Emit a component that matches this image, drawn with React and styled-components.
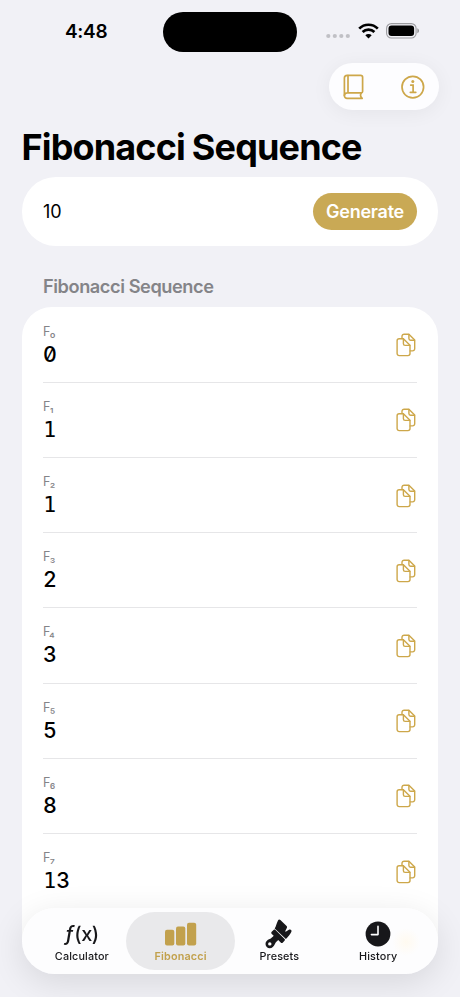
import React, { useState } from 'react';
import styled, { createGlobalStyle, ThemeProvider } from 'styled-components';

const theme = {
  colors: {
    page: '#f1f1f6',
    card: '#ffffff',
    gold: '#c9a955',
    icon: '#cda74a',
    label: '#848488',
    line: '#e6e6e8',
    text: '#000000',
  },
};

const GlobalStyle = createGlobalStyle`
  * {
    box-sizing: border-box;
  }

  body {
    margin: 0;
    background: #f1f1f6;
    font-family: Inter, 'Liberation Sans', sans-serif;
    -webkit-font-smoothing: antialiased;
  }

  button {
    border: 0;
    padding: 0;
    background: none;
    font-family: inherit;
    color: inherit;
  }
`;

const Screen = styled.div`
  height: 997px;
  overflow: hidden;
  background-color: ${({ theme }) => theme.colors.page};
  color: ${({ theme }) => theme.colors.text};
`;

const StatusBar = styled.div`
  height: 63px;
  display: grid;
  grid-template-columns: 163px 134px 1fr;
  align-items: center;
`;

const Clock = styled.div`
  padding-left: 65px;
  padding-top: 1px;
  font-size: 19px;
  line-height: 24px;
  font-weight: 600;
  letter-spacing: -0.3px;
`;

const Island = styled.div`
  height: 39.5px;
  border-radius: 20px;
  background-color: #000;
  margin-top: 1px;
`;

const Indicators = styled.div`
  display: flex;
  align-items: center;
  gap: 7.5px;
  padding-left: 29px;
  padding-bottom: 1px;
`;

const Toolbar = styled.div`
  width: 109.5px;
  height: 47px;
  margin-left: auto;
  margin-right: 21.5px;
  padding: 0 13px 0 14.3px;
  display: flex;
  align-items: center;
  justify-content: space-between;
  border-radius: 24px;
  background-color: #fdfdff;
  box-shadow: 0 3px 20px rgba(0, 0, 0, 0.055);
`;

const ToolbarButton = styled.button`
  height: 26px;
  display: flex;
  color: ${({ theme }) => theme.colors.icon};
`;

const Title = styled.h1`
  margin: 15px 0 8px 21.5px;
  font-size: 36px;
  line-height: 44px;
  font-weight: 700;
  letter-spacing: -0.85px;
  word-spacing: -0.8px;
  white-space: nowrap;
`;

const Content = styled.main`
  padding: 0 22px;
`;

const InputCard = styled.section`
  height: 68.5px;
  padding: 0 21px;
  display: flex;
  align-items: center;
  justify-content: space-between;
  border-radius: 34px;
  background-color: ${({ theme }) => theme.colors.card};
`;

const InputValue = styled.span`
  font-size: 18px;
  letter-spacing: -0.1px;
`;

const GenerateButton = styled.button`
  width: 104px;
  height: 36.5px;
  border-radius: 19px;
  background-color: ${({ theme }) => theme.colors.gold};
  color: #fff;
  font-size: 18px;
  font-weight: 600;
  letter-spacing: -0.25px;
`;

const SectionTitle = styled.h2`
  margin: 29px 0 9.5px 21px;
  font-size: 18.2px;
  line-height: 23px;
  font-weight: 600;
  letter-spacing: -0.43px;
  color: ${({ theme }) => theme.colors.label};
`;

const List = styled.section`
  height: 635px;
  padding: 0.6px 21px 0;
  border-radius: 30px 30px 0 0;
  background-color: ${({ theme }) => theme.colors.card};
`;

const Row = styled.div`
  height: 75.2px;
  padding-top: 1px;
  display: flex;
  align-items: center;
  justify-content: space-between;
  border-bottom: 1.2px solid ${({ theme }) => theme.colors.line};

  &:last-child {
    border-bottom-color: transparent;
  }
`;

const RowText = styled.div`
  display: flex;
  flex-direction: column;
`;

const Index = styled.span`
  font-size: 12.5px;
  line-height: 18px;
  letter-spacing: -0.7px;
  color: ${({ theme }) => theme.colors.label};
`;

const Value = styled.span`
  display: flex;
  line-height: 27px;
`;

const Digit = styled.span`
  width: 13.3px;
  text-align: center;
  font-family: ${({ $slab }) => ($slab ? "'DejaVu Sans Mono', monospace" : 'Inter, sans-serif')};
  font-size: 21.4px;
  font-weight: ${({ $slab }) => ($slab ? 400 : 500)};
  font-feature-settings: 'zero', 'tnum';
`;

const CopyButton = styled.button`
  display: flex;
  margin-right: 1.5px;
  color: ${({ theme }) => theme.colors.icon};
`;

const TabBar = styled.nav`
  position: fixed;
  left: 22px;
  right: 22px;
  top: 908px;
  height: 66px;
  padding: 4px 10.5px;
  display: grid;
  grid-template-columns: repeat(4, 1fr);
  border-radius: 33px;
  background: radial-gradient(circle at 384px 34px, #fffaf0 0, #fdfdfe 14px);
  box-shadow: 0 8px 34px rgba(0, 0, 0, 0.11);
`;

const Tab = styled.button`
  margin: 0 -5px;
  display: flex;
  flex-direction: column;
  align-items: center;
  border-radius: 29px;
  background-color: ${({ $active }) => ($active ? '#e9e9eb' : 'transparent')};
  color: ${({ $active }) => ($active ? '#c2a14d' : '#17171a')};
`;

const TabIcon = styled.span`
  height: 36px;
  display: flex;
  align-items: center;
  padding-top: 7px;
`;

const TabLabel = styled.span`
  font-size: 10.8px;
  line-height: 14px;
  margin-top: 2px;
  font-weight: ${({ $active }) => ($active ? 600 : 500)};
  letter-spacing: 0.15px;
`;

const FunctionText = styled.span`
  font-size: 20px;
  font-weight: 500;
  line-height: 24px;
  letter-spacing: -0.5px;

  em {
    font-size: 21px;
    margin-right: 1px;
  }
`;

const SignalDots = styled.svg`
  margin-top: 10px;
`;

const SignalIcon = () => (
  <SignalDots width="24" height="6" viewBox="0 0 24 6" fill="#c0c0c5">
    <circle cx="2.3" cy="3" r="2.1" />
    <circle cx="8.8" cy="3" r="2.1" />
    <circle cx="15.3" cy="3" r="2.1" />
    <circle cx="21.8" cy="3" r="2.1" />
  </SignalDots>
);

const WifiIcon = () => (
  <svg width="21" height="16" viewBox="0 0 21 16">
    <g fill="none" stroke="#000" strokeWidth="2.7">
      <path d="M1.2 5.6a13.1 13.1 0 0 1 18.6 0" />
      <path d="M4.6 9a8.4 8.4 0 0 1 11.8 0" />
    </g>
    <path d="M10.5 15.6 7.3 12.3a4.6 4.6 0 0 1 6.4 0Z" />
  </svg>
);

const BatteryIcon = () => (
  <svg width="34" height="16" viewBox="0 0 34 16">
    <rect x=".6" y=".6" width="29.5" height="14.4" rx="4.8" fill="none" stroke="#9b9b9f" strokeWidth="1.1" />
    <rect x="2.5" y="2.5" width="25.6" height="10.6" rx="3" />
    <path d="M31.3 5.3c2.3.8 2.3 4.2 0 5Z" fill="#96969a" />
  </svg>
);

const BookIcon = () => (
  <svg width="22" height="26" viewBox="0 0 22 26" fill="none" stroke="currentColor" strokeWidth="1.7" strokeLinejoin="round" strokeLinecap="round">
    <path d="M4.2 1.3h13.4a2 2 0 0 1 2 2v14.1a1.5 1.5 0 0 1-1.3 1.5c-1.4 2-.8 3.8.9 5.5H4.1a2.6 2.6 0 0 1-2.7-2.6V4.1a2.8 2.8 0 0 1 2.8-2.8Z" />
    <path d="M1.4 21.3c.2-1.6 1.2-2.5 2.8-2.5h14M5 1.5v17" />
  </svg>
);

const InfoIcon = () => (
  <svg width="26" height="26" viewBox="0 0 26 26" fill="none" stroke="currentColor" strokeWidth="1.7" strokeLinecap="round">
    <circle cx="12.8" cy="13.1" r="10.8" />
    <path d="M10.7 11.1h2.4v7M10.3 18.3h5.5" />
    <circle cx="12.8" cy="7.6" r="1.5" fill="currentColor" stroke="none" />
  </svg>
);

const CopyIcon = () => (
  <svg width="20" height="24" viewBox="0 0 20 24" fill="none" stroke="currentColor" strokeWidth="1.4" strokeLinejoin="round" strokeLinecap="round">
    <path d="M6 5.6V3.3a2.1 2.1 0 0 1 2.1-2.1h4.8l5.8 5.7v8.9a2.1 2.1 0 0 1-2.1 2.1h-2.4" />
    <path d="M12.9 1.4v4.1c0 1.2.6 1.7 1.7 1.7h3.9" />
    <path d="M3.2 5.7h4.2l6.6 6.6v8.2a2.1 2.1 0 0 1-2.1 2.1H3.2a2.1 2.1 0 0 1-2.1-2.1V7.8a2.1 2.1 0 0 1 2.1-2.1Z" />
    <path d="M7.4 5.9v4.8c0 1.2.6 1.7 1.7 1.7h4.7" />
  </svg>
);

const BarsIcon = () => (
  <svg width="33" height="24" viewBox="0 0 33 24" fill="currentColor">
    <rect x="1" y="7.8" width="9.3" height="15.6" rx="2" />
    <rect x="12" y="4.6" width="9.3" height="18.8" rx="2" />
    <rect x="23" y=".8" width="9.2" height="22.6" rx="2" />
  </svg>
);

const BrushIcon = () => (
  <svg width="28" height="30" viewBox="0 0 28 30" fill="currentColor">
    <path d="M13 1.4c.6-1 1.6-1.1 2.4-.3l6.2 5.8c.6.6.6 1.3.2 2l-1.5 3c-.3.7.2 1 .8.7l2.8-1.9c1.6-1 3.3.5 2.4 2.2-1.2 2.5-3 4.7-5.4 7.1L9.7 9.6c1.4-2.6 2-5.6 3.3-8.2Z" />
    <path
      fillRule="evenodd"
      d="M8.8 10.7c.5-.4 1-.3 1.4.1l9.4 9.3c.5.5.5 1 .1 1.4l-1.8 2c-.7.7-1.5.7-2.2 0l-2.5-2.4c-1.3 1.3-2.4 2.2-3.4 4.1-1 2.2-2.6 4.1-5.1 4.1a4.2 4.2 0 0 1-4.2-4.2c0-2.6 1.8-4 4.1-5 1.8-.9 2.9-2.1 4.1-3.4l-1.9-1.8c-.7-.7-.7-1.5-.1-2.2ZM4.8 23.2a1.7 1.7 0 1 0 0 3.4 1.7 1.7 0 0 0 0-3.4Z"
    />
  </svg>
);

const ClockIcon = () => (
  <svg width="26" height="26" viewBox="0 0 26 26">
    <circle cx="13" cy="13" r="12.4" fill="currentColor" />
    <path d="M13 5.4V13.6H6.4" fill="none" stroke="#fff" strokeWidth="1.6" strokeLinecap="round" strokeLinejoin="round" />
  </svg>
);

const SUBSCRIPTS = '₀₁₂₃₄₅₆₇';
const sequence = [0, 1, 1, 2, 3, 5, 8, 13];

const tabs = [
  {
    label: 'Calculator',
    icon: <FunctionText><em>ƒ</em>(x)</FunctionText>,
  },
  { label: 'Fibonacci', icon: <BarsIcon /> },
  { label: 'Presets', icon: <BrushIcon /> },
  { label: 'History', icon: <ClockIcon /> },
];

const SequenceRow = ({ index, value }) => (
  <Row>
    <RowText>
      <Index>F{SUBSCRIPTS[index]}</Index>
      <Value>
        {String(value).split('').map((digit, i) => (
          <Digit key={i} $slab={digit === '1'}>{digit}</Digit>
        ))}
      </Value>
    </RowText>
    <CopyButton aria-label="Copy">
      <CopyIcon />
    </CopyButton>
  </Row>
);

const App = () => {
  const [activeTab, setActiveTab] = useState('Fibonacci');

  return (
    <ThemeProvider theme={theme}>
      <GlobalStyle />
      <Screen>
        <StatusBar>
          <Clock>4:48</Clock>
          <Island />
          <Indicators>
            <SignalIcon />
            <WifiIcon />
            <BatteryIcon />
          </Indicators>
        </StatusBar>

        <Toolbar>
          <ToolbarButton aria-label="Guide"><BookIcon /></ToolbarButton>
          <ToolbarButton aria-label="Info"><InfoIcon /></ToolbarButton>
        </Toolbar>

        <Title>Fibonacci Sequence</Title>

        <Content>
          <InputCard>
            <InputValue>10</InputValue>
            <GenerateButton>Generate</GenerateButton>
          </InputCard>

          <SectionTitle>Fibonacci Sequence</SectionTitle>
          <List>
            {sequence.map((value, index) => (
              <SequenceRow key={index} index={index} value={value} />
            ))}
          </List>
        </Content>

        <TabBar>
          {tabs.map(({ label, icon }) => (
            <Tab key={label} $active={label === activeTab} onClick={() => setActiveTab(label)}>
              <TabIcon>{icon}</TabIcon>
              <TabLabel $active={label === activeTab}>{label}</TabLabel>
            </Tab>
          ))}
        </TabBar>
      </Screen>
    </ThemeProvider>
  );
};

export default App;
